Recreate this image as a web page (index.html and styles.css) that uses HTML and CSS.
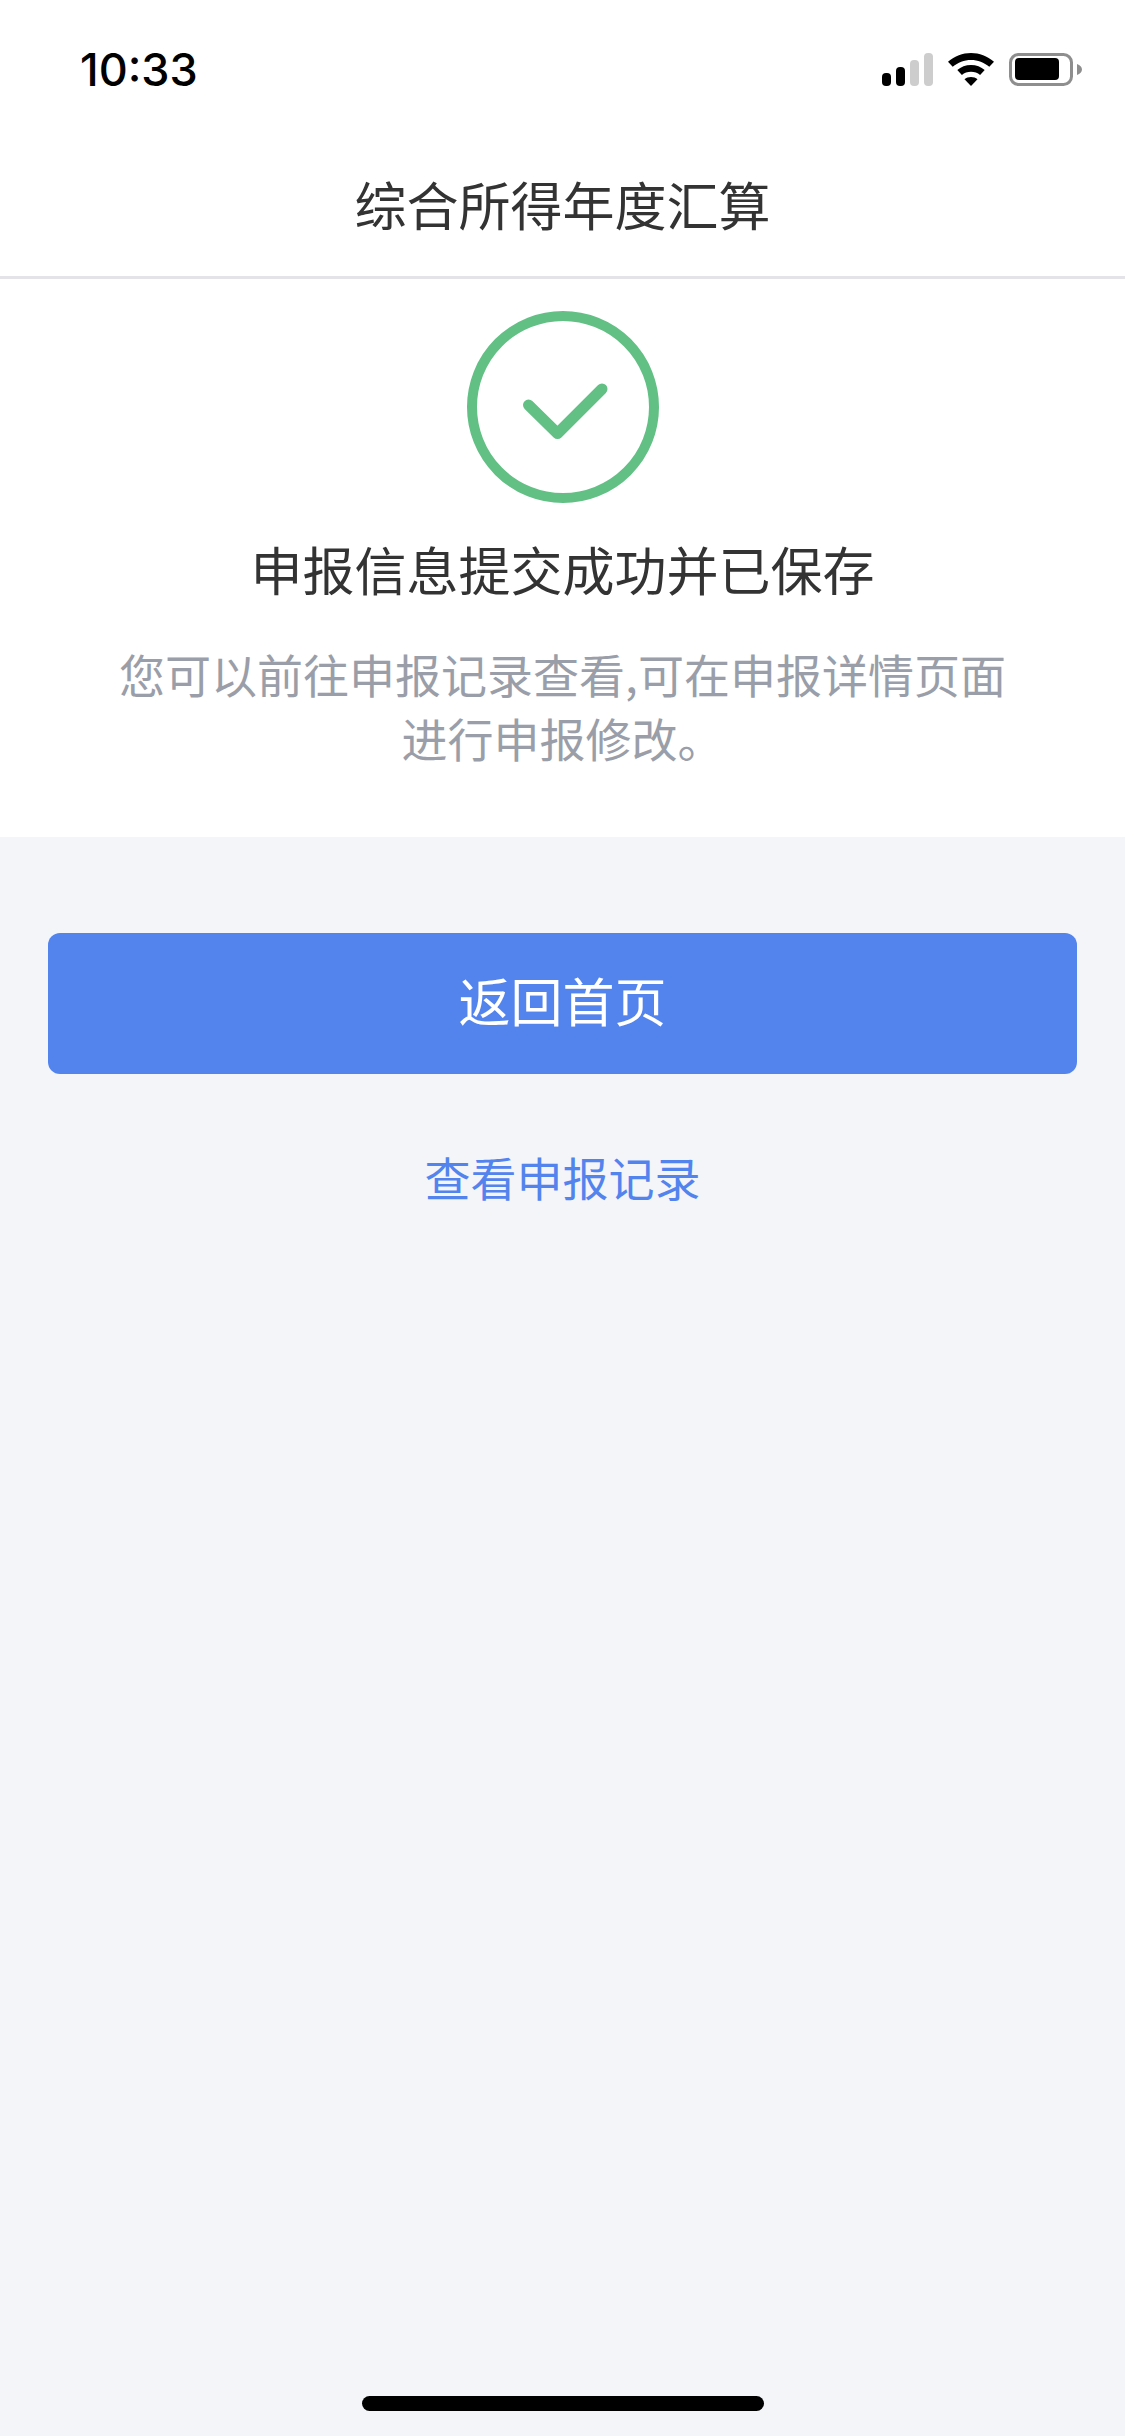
FILE: index.html
```html
<!DOCTYPE html>
<html lang="zh-CN">
<head>
    <meta charset="UTF-8">
    <meta name="viewport" content="width=device-width, initial-scale=1.0">
    <title>综合所得年度汇算</title>
    <link rel="stylesheet" href="styles.css">
</head>
<body>
    <div class="page">
        <div class="status-bar">
            <span class="status-time">10:33</span>
            <div class="status-icons">
                <svg width="51" height="33" viewBox="0 0 51 33">
                    <rect x="0" y="20" width="9" height="13" rx="4" fill="#000"/>
                    <rect x="14" y="14" width="9" height="19" rx="4" fill="#000"/>
                    <rect x="28" y="7" width="9" height="26" rx="4" fill="#cdcdcd"/>
                    <rect x="42" y="0" width="9" height="33" rx="4" fill="#cdcdcd"/>
                </svg>
                <svg width="46" height="33" viewBox="0 0 46 33">
                    <path d="M23 0C14.500 0 6.800 3.300 0 8.700l4.700 5C10 9.500 16.100 7 23 7s13 2.500 18.300 6.700l4.700-5C39.200 3.300 31.500 0 23 0z" fill="#000"/>
                    <path d="M23 12c-5.300 0-10.100 1.900-13.700 5l4.600 4.900c2.500-2 5.600-3.100 9.100-3.100s6.600 1.100 9.100 3.100l4.600-4.900C33.100 13.900 28.300 12 23 12z" fill="#000"/>
                    <path d="M23 24c-2.500 0-4.800.9-6.500 2.200L23 33l6.500-6.800C27.800 24.900 25.500 24 23 24z" fill="#000"/>
                </svg>
                <svg width="73" height="33" viewBox="0 0 73 33">
                    <rect x="1.500" y="1.500" width="61" height="30" rx="8" fill="none" stroke="#8e8e8e" stroke-width="3"/>
                    <rect x="6" y="5" width="44" height="22" rx="4" fill="#000"/>
                    <path d="M68 11c3 1 5 3 5 5.500S71 21 68 22z" fill="#8e8e8e"/>
                </svg>
            </div>
        </div>

        <header class="nav-bar">
            <h1 class="nav-title">综合所得年度汇算</h1>
        </header>

        <section class="result">
            <svg class="result-icon" width="192" height="192" viewBox="0 0 192 192">
                <circle cx="96" cy="96" r="91" fill="none" stroke="#62c084" stroke-width="10"/>
                <path d="M61.500 94 L90.500 122.500 L135 78" fill="none" stroke="#62c084" stroke-width="11" stroke-linecap="round" stroke-linejoin="round"/>
            </svg>
            <h2 class="result-title">申报信息提交成功并已保存</h2>
            <p class="result-desc">您可以前往申报记录查看,可在申报详情页面<br>进行申报修改。</p>
        </section>

        <main class="actions">
            <button class="btn-home">返回首页</button>
            <a class="link-records">查看申报记录</a>
        </main>

        <div class="home-bar"><span class="home-indicator"></span></div>
    </div>
</body>
</html>
```

FILE: styles.css
```css
* {
    box-sizing: border-box;
}
body {
    margin: 0;
    background-color: #f3f5f9;
    font-family: "Noto Sans CJK SC", "Liberation Sans", sans-serif;
}
.page {
    display: flex;
    flex-direction: column;
    width: 1125px;
    height: 2436px;
    overflow: hidden;
}
.status-bar {
    display: flex;
    justify-content: space-between;
    align-items: center;
    height: 138px;
    padding: 0 43px 0 80px;
    background-color: #fff;
}
.status-time {
    font-family: Inter, "Liberation Sans", sans-serif;
    font-size: 45px;
    font-weight: 500;
    color: #000;
}
.status-icons {
    display: flex;
    align-items: center;
    gap: 15px;
}
.nav-bar {
    display: flex;
    justify-content: center;
    align-items: center;
    height: 141px;
    padding-bottom: 7px;
    background-color: #fff;
    border-bottom: 3px solid #e4e4e8;
}
.nav-title {
    margin: 0;
    font-size: 52px;
    font-weight: 400;
    color: #333;
}
.result {
    display: flex;
    flex-direction: column;
    align-items: center;
    height: 558px;
    padding-top: 32px;
    background-color: #fff;
}
.result-title {
    margin: 30px 0 0;
    font-size: 52px;
    line-height: 72px;
    font-weight: 400;
    color: #333;
}
.result-desc {
    margin: 36px 0 0;
    font-size: 46px;
    line-height: 64px;
    color: #9a9ea8;
    text-align: center;
}
.actions {
    display: flex;
    flex: 1;
    flex-direction: column;
    align-items: center;
    padding: 96px 48px 0;
}
.btn-home {
    width: 100%;
    height: 141px;
    padding-bottom: 10px;
    border: none;
    border-radius: 12px;
    background-color: #5384ee;
    color: #fff;
    font-family: inherit;
    font-size: 52px;
}
.link-records {
    margin-top: 70px;
    font-size: 46px;
    line-height: 64px;
    color: #5384ee;
}
.home-bar {
    display: flex;
    justify-content: center;
    height: 40px;
}
.home-indicator {
    width: 402px;
    height: 15px;
    border-radius: 8px;
    background-color: #000;
}
```
